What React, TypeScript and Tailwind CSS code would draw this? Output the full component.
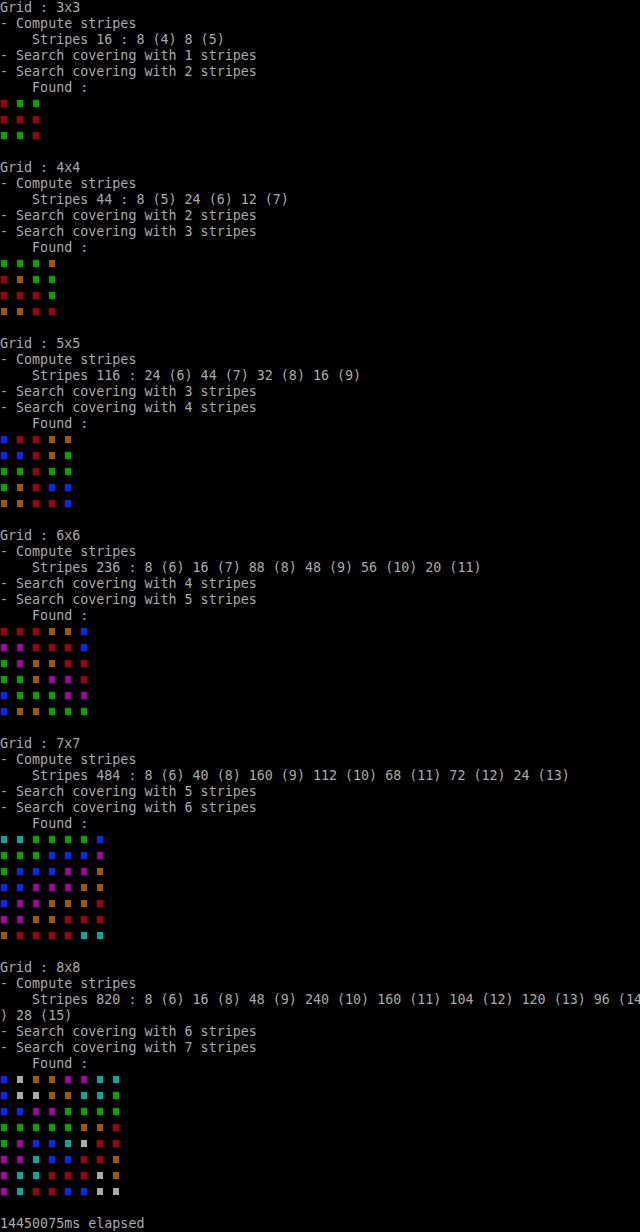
const colors: Record<string, string> = {
  R: 'bg-[#aa0000]',
  G: 'bg-[#00aa00]',
  B: 'bg-[#0028ff]',
  M: 'bg-[#aa00aa]',
  O: 'bg-[#aa5500]',
  C: 'bg-[#00aaaa]',
  W: 'bg-[#aaaaaa]',
};

type Run = { size: number; stripes: string[]; from: number; grid: string[] };

const runs: Run[] = [
  { size: 3, stripes: ['    Stripes 16 : 8 (4) 8 (5)'], from: 1, grid: ['RGG', 'RRR', 'GGR'] },
  { size: 4, stripes: ['    Stripes 44 : 8 (5) 24 (6) 12 (7)'], from: 2, grid: ['GGGO', 'ROGG', 'RRRG', 'OORR'] },
  {
    size: 5,
    stripes: ['    Stripes 116 : 24 (6) 44 (7) 32 (8) 16 (9)'],
    from: 3,
    grid: ['BRROO', 'BBROG', 'GGRGG', 'GORBB', 'OORRB'],
  },
  {
    size: 6,
    stripes: ['    Stripes 236 : 8 (6) 16 (7) 88 (8) 48 (9) 56 (10) 20 (11)'],
    from: 4,
    grid: ['RRROOB', 'MMRRRB', 'GMOORR', 'GGOMMR', 'BGGGMM', 'BOOGGG'],
  },
  {
    size: 7,
    stripes: ['    Stripes 484 : 8 (6) 40 (8) 160 (9) 112 (10) 68 (11) 72 (12) 24 (13)'],
    from: 5,
    grid: ['CCGGGGB', 'GGGBBBM', 'GBBBMMO', 'BBMMMOO', 'BMMOOOR', 'MMOORRR', 'ORRRRCC'],
  },
  {
    size: 8,
    stripes: [
      '    Stripes 820 : 8 (6) 16 (8) 48 (9) 240 (10) 160 (11) 104 (12) 120 (13) 96 (14',
      ') 28 (15)',
    ],
    from: 6,
    grid: ['BWOOMMCC', 'BWWOOCCG', 'BBMMGGGG', 'GGGGGOOR', 'GMBBCWRR', 'MMCBBRRO', 'MCCRRRWO', 'MCRRBBWW'],
  },
];

function Line({ text }: { text: string }) {
  return <div className="h-4 whitespace-pre">{text}</div>;
}

export default function App() {
  return (
    <div
      className="w-[640px] h-[1232px] bg-black text-[#aaaaaa] text-[13.33px] leading-[16px] overflow-hidden"
      style={{ fontFamily: '"DejaVu Sans Mono", "Liberation Mono", monospace' }}
    >
      {runs.map((run) => (
        <div key={run.size}>
          <Line text={`Grid : ${run.size}x${run.size}`} />
          <Line text="- Compute stripes" />
          {run.stripes.map((s, i) => (
            <Line key={i} text={s} />
          ))}
          <Line text={`- Search covering with ${run.from} stripes`} />
          <Line text={`- Search covering with ${run.from + 1} stripes`} />
          <Line text="    Found :" />
          {run.grid.map((row, r) => (
            <div key={r} className="h-4 flex">
              {row.split('').map((c, k) => (
                <div key={k} className="w-4 h-4 pl-px pt-1">
                  <div className={`w-[6px] h-[7px] ${colors[c]}`} />
                </div>
              ))}
            </div>
          ))}
          <div className="h-4" />
        </div>
      ))}
      <Line text="14450075ms elapsed" />
    </div>
  );
}
